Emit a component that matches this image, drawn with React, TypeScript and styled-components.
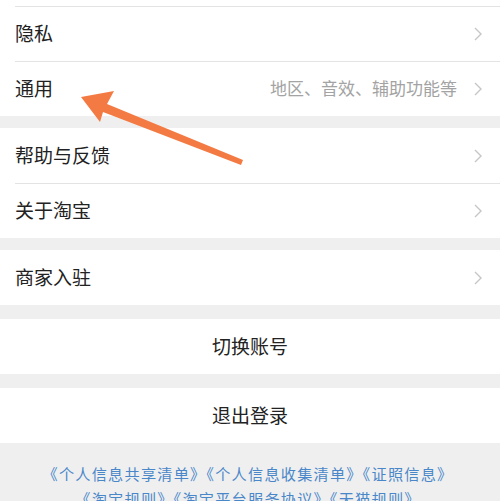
import React from 'react';
import styled, { createGlobalStyle } from 'styled-components';

const GlobalStyle = createGlobalStyle`
  html, body {
    margin: 0;
    padding: 0;
    background: #efefef;
    font-family: "Noto Sans CJK SC", "Noto Sans", sans-serif;
  }
`;

const Page = styled.div`
  position: relative;
  width: 500px;
  height: 501px;
  overflow: hidden;
  background: #efefef;
`;

const Group = styled.div<{ $gap?: number }>`
  background: #fff;
  margin-bottom: ${p => p.$gap ?? 0}px;
`;

const TopStrip = styled.div`
  height: 6px;
`;

const Row = styled.div`
  height: 55px;
  padding-left: 15px;
  box-sizing: border-box;
`;

const RowInner = styled.div<{ $line?: boolean }>`
  height: 100%;
  display: flex;
  align-items: center;
  padding: 0 18px 3px 0;
  box-sizing: border-box;
  border-top: ${p => (p.$line ? '1px solid #e3e3e3' : 'none')};
`;

const Label = styled.span`
  flex: 1;
  font-size: 19px;
  color: #222;
`;

const Hint = styled.span`
  font-size: 17px;
  color: #a3a3a3;
  margin-right: 17px;
`;

const ChevronBox = styled.span`
  display: flex;
  padding-top: 3px;
`;

const Action = styled.div`
  height: 55px;
  display: flex;
  align-items: center;
  justify-content: center;
  padding-bottom: 3px;
  box-sizing: border-box;
  font-size: 19px;
  color: #222;
`;

const Footer = styled.div`
  padding: 18px 4px 0 0;
  text-align: center;
  font-size: 15.2px;
  letter-spacing: 1.2px;
  line-height: 25px;
  color: #4a87c9;
  white-space: nowrap;
`;

const ArrowLayer = styled.svg`
  position: absolute;
  left: 0;
  top: 0;
  pointer-events: none;
`;

const Chevron = () => (
  <ChevronBox>
    <svg width="8" height="14" viewBox="0 0 8 14">
      <path d="M1 1 L7 7 L1 13" fill="none" stroke="#c6c6c6" strokeWidth="1.4" />
    </svg>
  </ChevronBox>
);

type Item = { label: string; hint?: string };

const Section = ({ items, gap, top }: { items: Item[]; gap: number; top?: boolean }) => (
  <Group $gap={gap}>
    {top && <TopStrip />}
    {items.map((item, i) => (
      <Row key={item.label}>
        <RowInner $line={top || i > 0}>
          <Label>{item.label}</Label>
          {item.hint && <Hint>{item.hint}</Hint>}
          <Chevron />
        </RowInner>
      </Row>
    ))}
  </Group>
);

export default function App() {
  return (
    <Page>
      <GlobalStyle />
      <Section top gap={12} items={[{ label: '隐私' }, { label: '通用', hint: '地区、音效、辅助功能等' }]} />
      <Section gap={12} items={[{ label: '帮助与反馈' }, { label: '关于淘宝' }]} />
      <Section gap={14} items={[{ label: '商家入驻' }]} />
      <Group $gap={14}>
        <Action>切换账号</Action>
      </Group>
      <Group>
        <Action>退出登录</Action>
      </Group>
      <Footer>
        <div>《个人信息共享清单》《个人信息收集清单》《证照信息》</div>
        <div>《淘宝规则》《淘宝平台服务协议》《天猫规则》</div>
      </Footer>
      <ArrowLayer width="500" height="501" viewBox="0 0 500 501">
        <polygon
          points="81,97 114,91 107,104 243,160 241,165 103,112 100,122"
          fill="#f47a43"
        />
      </ArrowLayer>
    </Page>
  );
}
